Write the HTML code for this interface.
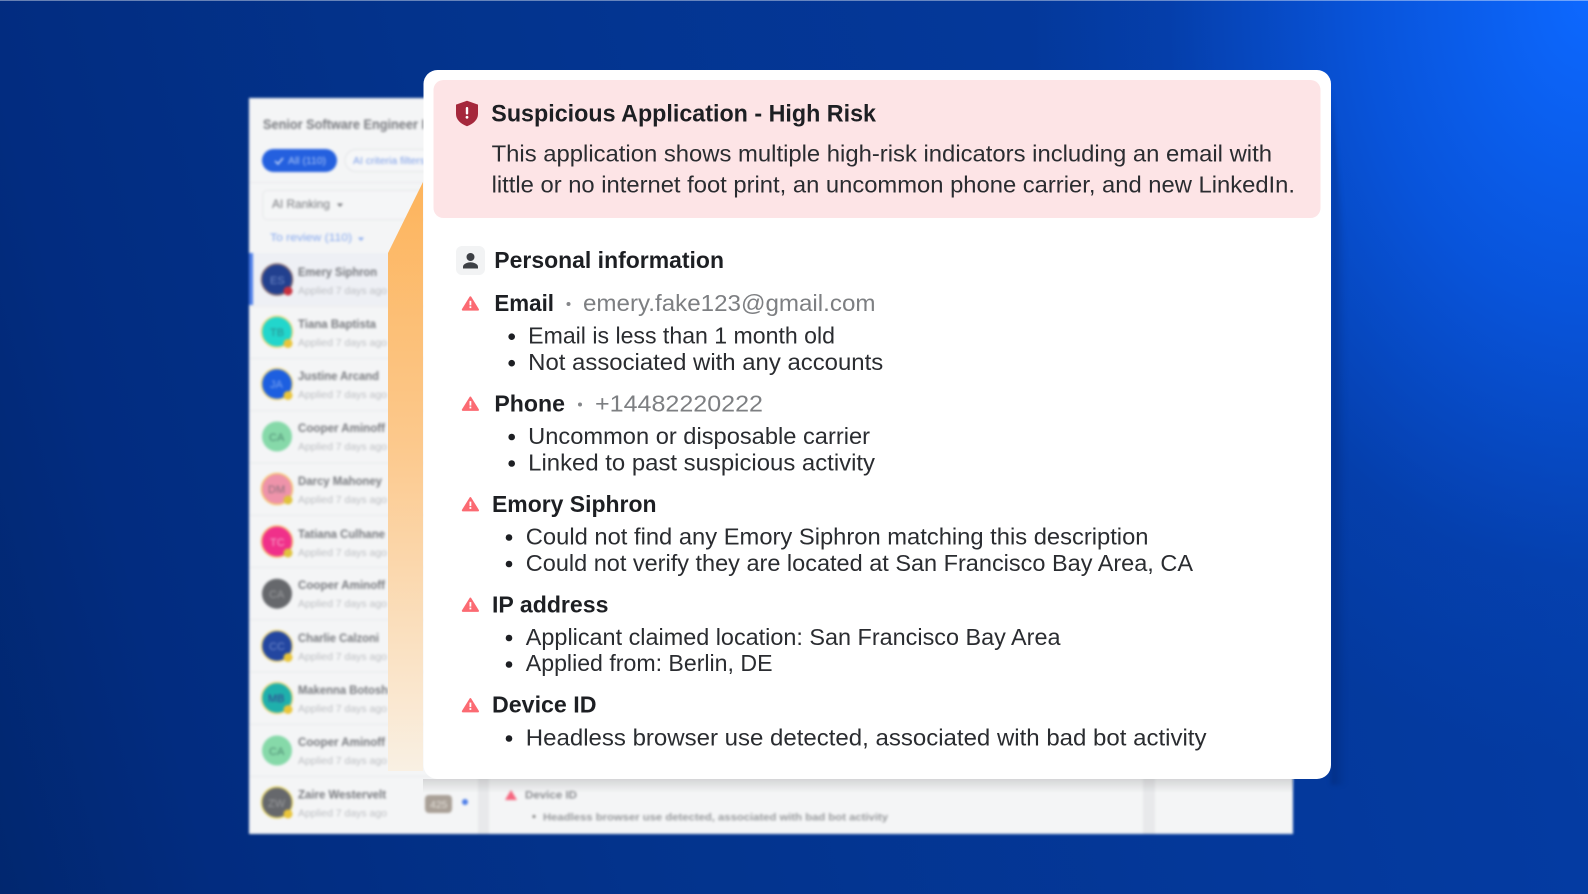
<!DOCTYPE html>
<html lang="en"><head><meta charset="utf-8"><title>Suspicious Application</title>
<style>
html,body{margin:0;padding:0;width:1588px;height:894px;overflow:hidden;background:#02297f}
#bg{position:absolute;left:0;top:0;width:1588px;height:894px;
background:radial-gradient(ellipse 560px 760px at 1588px 0,rgba(13,104,255,1) 0,rgba(9,88,228,.85) 40%,rgba(6,70,190,.4) 75%,rgba(4,58,160,0) 100%),linear-gradient(75deg,#01276f 0,#022c80 12%,#03338c 35%,#043ba2 87%,#0440ab 100%)}
#top{position:absolute;left:0;top:0;width:1588px;height:1px;background:rgba(255,255,255,.4)}
svg{position:absolute;left:0;top:0}
text{font-family:"Liberation Sans",Arial,sans-serif}
.h{font-weight:700;font-size:23.5px;fill:#1d1f23}
.b{font-size:23px;fill:#2a2c30}
.g{font-size:23px;fill:#7d7f82}
.n{font-weight:700;font-size:11.5px;fill:#77797e}
.s{font-size:10.5px;fill:#bcbec2}
</style></head><body>
<div id="bg"></div><div id="top"></div>
<svg width="1588" height="894" viewBox="0 0 1588 894" xmlns="http://www.w3.org/2000/svg">
<defs>
<linearGradient id="or" x1="0" y1="0" x2="0" y2="1"><stop offset="0" stop-color="#fdb45c"/><stop offset=".45" stop-color="#fcc98d"/><stop offset="1" stop-color="#f9f0e3"/></linearGradient>
<linearGradient id="sh" x1="0" y1="0" x2="0" y2="1"><stop offset="0" stop-color="#000" stop-opacity=".13"/><stop offset="1" stop-color="#000" stop-opacity="0"/></linearGradient>
<linearGradient id="shr" gradientUnits="userSpaceOnUse" x1="1331" y1="0" x2="1346" y2="0"><stop offset="0" stop-color="#001a55" stop-opacity=".32"/><stop offset="1" stop-color="#001a55" stop-opacity="0"/></linearGradient>
</defs>
<path d="M1331 90L1346 260V785H1331Z" fill="url(#shr)" style="filter:blur(2px)"/>
<g style="filter:blur(1.4px)">
<rect x="249" y="98" width="1044" height="736" fill="#f4f5f6"/>
<rect x="478" y="770" width="11" height="64" fill="#e8e9eb"/>
<rect x="1143" y="770" width="12" height="64" fill="#e8e9eb"/>
<text x="263" y="129" class="n" style="font-size:13.5px" textLength="162" lengthAdjust="spacingAndGlyphs">Senior Software Engineer I</text>
<rect x="249" y="182" width="180" height="1" fill="#e8e9eb"/>
<rect x="262" y="149" width="75" height="23" rx="11.5" fill="#2460df"/>
<text x="288" y="164" style="font-size:10px;fill:#a9c3f5" textLength="38" lengthAdjust="spacingAndGlyphs">All (110)</text>
<path d="M275 161l3 3 5-6" stroke="#c8d9fa" stroke-width="1.5" fill="none"/>
<rect x="345" y="149.500" width="90" height="22" rx="11" fill="#f6f7f8" stroke="#e2e4e7"/>
<text x="353" y="164" style="font-size:10px;fill:#7fa0e8" textLength="72" lengthAdjust="spacingAndGlyphs">AI criteria filters</text>
<rect x="263" y="190.500" width="170" height="29" rx="4" fill="#f5f6f7" stroke="#e6e7e9"/>
<text x="272" y="208" style="font-size:12px;fill:#75777b" textLength="58" lengthAdjust="spacingAndGlyphs">AI Ranking</text>
<path d="M337 203.500h6l-3 3.500z" fill="#75777b"/>
<text x="270" y="241" style="font-size:11px;fill:#86a8ee" textLength="82" lengthAdjust="spacingAndGlyphs">To review (110)</text>
<path d="M358 237.500h6l-3 3.500z" fill="#86a8ee"/>
<rect x="249" y="253" width="140" height="52" fill="#eef0f5"/>
<rect x="249" y="253" width="4" height="52" fill="#4d7ee8"/>
<g fill="#ecedef"><rect x="249" y="305.500" width="230" height="1.500"/><rect x="249" y="357.700" width="230" height="1.500"/><rect x="249" y="410" width="230" height="1.500"/><rect x="249" y="462.200" width="230" height="1.500"/><rect x="249" y="514.500" width="230" height="1.500"/><rect x="249" y="566.700" width="230" height="1.500"/><rect x="249" y="619" width="230" height="1.500"/><rect x="249" y="671.200" width="230" height="1.500"/><rect x="249" y="723.500" width="230" height="1.500"/><rect x="249" y="775.700" width="230" height="1.500"/></g>

<circle cx="277" cy="279.500" r="15.500" fill="#22408f" stroke="#8b6f70" stroke-width="1.500"/><text x="270" y="284" style="font-size:11px;fill:#6f88c8">ES</text><circle cx="288" cy="291" r="4.500" fill="#c8323f"/>
<text x="298" y="276" class="n" textLength="79" lengthAdjust="spacingAndGlyphs">Emery Siphron</text><text x="298" y="294" class="s" textLength="89" lengthAdjust="spacingAndGlyphs">Applied 7 days ago</text>

<circle cx="277" cy="331.700" r="15.500" fill="#22d6cc" stroke="#f3d97a" stroke-width="1.500"/><text x="270" y="336" style="font-size:11px;fill:#2a8e90">TB</text><circle cx="288" cy="343.500" r="4.500" fill="#e9c53a"/>
<text x="298" y="328" class="n" textLength="78" lengthAdjust="spacingAndGlyphs">Tiana Baptista</text><text x="298" y="346" class="s" textLength="89" lengthAdjust="spacingAndGlyphs">Applied 7 days ago</text>

<circle cx="277" cy="384" r="15.500" fill="#1d5fe0" stroke="#f3d97a" stroke-width="1.500"/><text x="270" y="388" style="font-size:11px;fill:#7ba4f0">JA</text><circle cx="288" cy="395.500" r="4.500" fill="#e9c53a"/>
<text x="298" y="380" class="n" textLength="81" lengthAdjust="spacingAndGlyphs">Justine Arcand</text><text x="298" y="398" class="s" textLength="89" lengthAdjust="spacingAndGlyphs">Applied 7 days ago</text>

<circle cx="277" cy="436.500" r="15" fill="#86d9a9"/><text x="269" y="441" style="font-size:11px;fill:#4f8d74">CA</text>
<text x="298" y="432" class="n" textLength="87" lengthAdjust="spacingAndGlyphs">Cooper Aminoff</text><text x="298" y="450" class="s" textLength="89" lengthAdjust="spacingAndGlyphs">Applied 7 days ago</text>

<circle cx="277" cy="489" r="15.500" fill="#ee93aa" stroke="#f8c66f" stroke-width="1.500"/><text x="268" y="493" style="font-size:11px;fill:#8a6f7c">DM</text><circle cx="288" cy="500" r="4.500" fill="#e0c23d"/>
<text x="298" y="485" class="n" textLength="84" lengthAdjust="spacingAndGlyphs">Darcy Mahoney</text><text x="298" y="503" class="s" textLength="89" lengthAdjust="spacingAndGlyphs">Applied 7 days ago</text>

<circle cx="277" cy="541.500" r="15.500" fill="#f0308a" stroke="#f8b86f" stroke-width="1.500"/><text x="270" y="546" style="font-size:11px;fill:#f7a7cc">TC</text><circle cx="288" cy="553" r="4.500" fill="#e0c23d"/>
<text x="298" y="538" class="n" textLength="87" lengthAdjust="spacingAndGlyphs">Tatiana Culhane</text><text x="298" y="556" class="s" textLength="89" lengthAdjust="spacingAndGlyphs">Applied 7 days ago</text>

<circle cx="277" cy="593.700" r="15" fill="#66686c"/><text x="269" y="598" style="font-size:11px;fill:#9a9b9e">CA</text>
<text x="298" y="589" class="n" textLength="87" lengthAdjust="spacingAndGlyphs">Cooper Aminoff</text><text x="298" y="607" class="s" textLength="89" lengthAdjust="spacingAndGlyphs">Applied 7 days ago</text>

<circle cx="277" cy="646" r="15.500" fill="#2346a0" stroke="#f3d97a" stroke-width="1.500"/><text x="269" y="650" style="font-size:11px;fill:#7089cc">CC</text><circle cx="288" cy="657.500" r="4.500" fill="#e9c53a"/>
<text x="298" y="642" class="n" textLength="81" lengthAdjust="spacingAndGlyphs">Charlie Calzoni</text><text x="298" y="660" class="s" textLength="89" lengthAdjust="spacingAndGlyphs">Applied 7 days ago</text>

<circle cx="277" cy="698" r="15.500" fill="#1fb0ac" stroke="#f3d97a" stroke-width="1.500"/><text x="268" y="702" style="font-size:11px;fill:#36408f">MB</text><circle cx="288" cy="709.500" r="4.500" fill="#e9c53a"/>
<text x="298" y="694" class="n" textLength="90" lengthAdjust="spacingAndGlyphs">Makenna Botosh</text><text x="298" y="712" class="s" textLength="89" lengthAdjust="spacingAndGlyphs">Applied 7 days ago</text>

<circle cx="277" cy="750.500" r="15" fill="#86d9a9"/><text x="269" y="755" style="font-size:11px;fill:#4f8d74">CA</text>
<text x="298" y="746" class="n" textLength="87" lengthAdjust="spacingAndGlyphs">Cooper Aminoff</text><text x="298" y="764" class="s" textLength="89" lengthAdjust="spacingAndGlyphs">Applied 7 days ago</text>

<circle cx="277" cy="802.500" r="15.500" fill="#66686c" stroke="#e9d86a" stroke-width="1.500"/><text x="268" y="807" style="font-size:11px;fill:#9a9b9e">ZW</text><circle cx="288" cy="814" r="4.500" fill="#e9c53a"/>
<text x="298" y="798.500" class="n" textLength="88" lengthAdjust="spacingAndGlyphs">Zaire Westervelt</text><text x="298" y="816.500" class="s" textLength="89" lengthAdjust="spacingAndGlyphs">Applied 7 days ago</text>

<rect x="425" y="795" width="27" height="18" rx="4" fill="#a9a097"/><text x="430" y="808" style="font-size:10.500px;fill:#e6e2dc">425</text>
<circle cx="465" cy="802" r="3" fill="#4d7ee8"/>
<path d="M511 790l6 10h-12z" fill="#f5677f"/>
<text x="525" y="798.500" style="font-size:11px;font-weight:700;fill:#8b8d91" textLength="52" lengthAdjust="spacingAndGlyphs">Device ID</text>
<circle cx="534" cy="816.500" r="1.500" fill="#777"/>
<text x="543" y="820.500" style="font-size:10.500px;font-weight:700;fill:#97999c" textLength="345" lengthAdjust="spacingAndGlyphs">Headless browser use detected, associated with bad bot activity</text>
</g>
<path d="M388 253 L423 182 V771 H388Z" fill="url(#or)"/>
<rect x="423" y="779" width="870" height="14" fill="url(#sh)"/>
<rect x="423.500" y="70" width="907.500" height="709" rx="14" fill="#fff"/>
<rect x="433.500" y="80" width="887" height="138" rx="10" fill="#fde4e6"/>

<path d="M467 100.700l11 3.900v9.400c0 5.800-4.700 9.800-11 12.200c-6.300-2.400-11-6.400-11-12.200v-9.400z" fill="#a5283c"/>
<rect x="465.800" y="107" width="2.400" height="7.500" rx="1" fill="#fff"/><circle cx="467" cy="117.300" r="1.400" fill="#fff"/>

<text x="491.300" y="121.300" class="h" style="font-size:24px" textLength="384.700" lengthAdjust="spacingAndGlyphs">Suspicious Application - High Risk</text>
<text x="491.600" y="161.700" class="b" textLength="780.400" lengthAdjust="spacingAndGlyphs">This application shows multiple high-risk indicators including an email with</text>
<text x="491.600" y="192.700" class="b" textLength="803.400" lengthAdjust="spacingAndGlyphs">little or no internet foot print, an uncommon phone carrier, and new LinkedIn.</text>

<rect x="456" y="246" width="29" height="29" rx="6" fill="#f2f3f4"/>
<circle cx="470.500" cy="257" r="4" fill="#3d4045"/>
<path d="M463 268.500v-1.800c0-3.100 5-4.500 7.500-4.500s7.500 1.400 7.500 4.500v1.800z" fill="#3d4045"/>
<text x="494.300" y="268" class="h" textLength="229.700" lengthAdjust="spacingAndGlyphs">Personal information</text>

<g id="tri">
<path d="M470.400 297.300l7.600 12.300h-15.200z" fill="#fb6a72" stroke="#fb6a72" stroke-width="2" stroke-linejoin="round"/><rect x="469.500" y="300.800" width="1.800" height="4.500" fill="#fff"/><rect x="469.500" y="306.300" width="1.800" height="1.800" fill="#fff"/>
<path d="M470.400 397.600l7.600 12.300h-15.200z" fill="#fb6a72" stroke="#fb6a72" stroke-width="2" stroke-linejoin="round"/><rect x="469.500" y="401.100" width="1.800" height="4.500" fill="#fff"/><rect x="469.500" y="406.600" width="1.800" height="1.800" fill="#fff"/>
<path d="M470.400 498.100l7.600 12.300h-15.200z" fill="#fb6a72" stroke="#fb6a72" stroke-width="2" stroke-linejoin="round"/><rect x="469.500" y="501.600" width="1.800" height="4.500" fill="#fff"/><rect x="469.500" y="507.100" width="1.800" height="1.800" fill="#fff"/>
<path d="M470.400 598.600l7.600 12.300h-15.200z" fill="#fb6a72" stroke="#fb6a72" stroke-width="2" stroke-linejoin="round"/><rect x="469.500" y="602.100" width="1.800" height="4.500" fill="#fff"/><rect x="469.500" y="607.600" width="1.800" height="1.800" fill="#fff"/>
<path d="M470.400 699.100l7.600 12.300h-15.200z" fill="#fb6a72" stroke="#fb6a72" stroke-width="2" stroke-linejoin="round"/><rect x="469.500" y="702.600" width="1.800" height="4.500" fill="#fff"/><rect x="469.500" y="708.100" width="1.800" height="1.800" fill="#fff"/>
</g>

<text x="494.400" y="310.800" class="h" textLength="59.600" lengthAdjust="spacingAndGlyphs">Email</text>
<circle cx="568.500" cy="304" r="2" fill="#85878a"/>
<text x="583" y="311" class="g" textLength="292.500" lengthAdjust="spacingAndGlyphs">emery.fake123@gmail.com</text>
<circle cx="511.700" cy="336.700" r="3.300" fill="#1d1f23"/><text x="528.200" y="343.500" class="b" textLength="306.800" lengthAdjust="spacingAndGlyphs">Email is less than 1 month old</text>
<circle cx="511.700" cy="363.200" r="3.300" fill="#1d1f23"/><text x="528.200" y="370" class="b" textLength="355" lengthAdjust="spacingAndGlyphs">Not associated with any accounts</text>

<text x="494.400" y="411.300" class="h" textLength="70.600" lengthAdjust="spacingAndGlyphs">Phone</text>
<circle cx="580" cy="404.500" r="2" fill="#85878a"/>
<text x="595" y="411.500" class="g" textLength="168" lengthAdjust="spacingAndGlyphs">+14482220222</text>
<circle cx="511.700" cy="437" r="3.300" fill="#1d1f23"/><text x="528.200" y="443.800" class="b" textLength="341.800" lengthAdjust="spacingAndGlyphs">Uncommon or disposable carrier</text>
<circle cx="511.700" cy="463.500" r="3.300" fill="#1d1f23"/><text x="528.200" y="470.300" class="b" textLength="346.800" lengthAdjust="spacingAndGlyphs">Linked to past suspicious activity</text>

<text x="492" y="511.800" class="h" textLength="164.500" lengthAdjust="spacingAndGlyphs">Emory Siphron</text>
<circle cx="509" cy="537.500" r="3.300" fill="#1d1f23"/><text x="525.800" y="544.300" class="b" textLength="622.700" lengthAdjust="spacingAndGlyphs">Could not find any Emory Siphron matching this description</text>
<circle cx="509" cy="564" r="3.300" fill="#1d1f23"/><text x="525.800" y="570.800" class="b" textLength="667.200" lengthAdjust="spacingAndGlyphs">Could not verify they are located at San Francisco Bay Area, CA</text>

<text x="492" y="612.300" class="h" textLength="116.500" lengthAdjust="spacingAndGlyphs">IP address</text>
<circle cx="509" cy="638" r="3.300" fill="#1d1f23"/><text x="525.800" y="644.800" class="b" textLength="534.700" lengthAdjust="spacingAndGlyphs">Applicant claimed location: San Francisco Bay Area</text>
<circle cx="509" cy="664.500" r="3.300" fill="#1d1f23"/><text x="525.800" y="671" class="b" textLength="246.700" lengthAdjust="spacingAndGlyphs">Applied from: Berlin, DE</text>

<text x="492" y="712.600" class="h" textLength="104.500" lengthAdjust="spacingAndGlyphs">Device ID</text>
<circle cx="509" cy="738.500" r="3.300" fill="#1d1f23"/><text x="525.800" y="745.300" class="b" textLength="680.700" lengthAdjust="spacingAndGlyphs">Headless browser use detected, associated with bad bot activity</text>
</svg>
</body></html>
